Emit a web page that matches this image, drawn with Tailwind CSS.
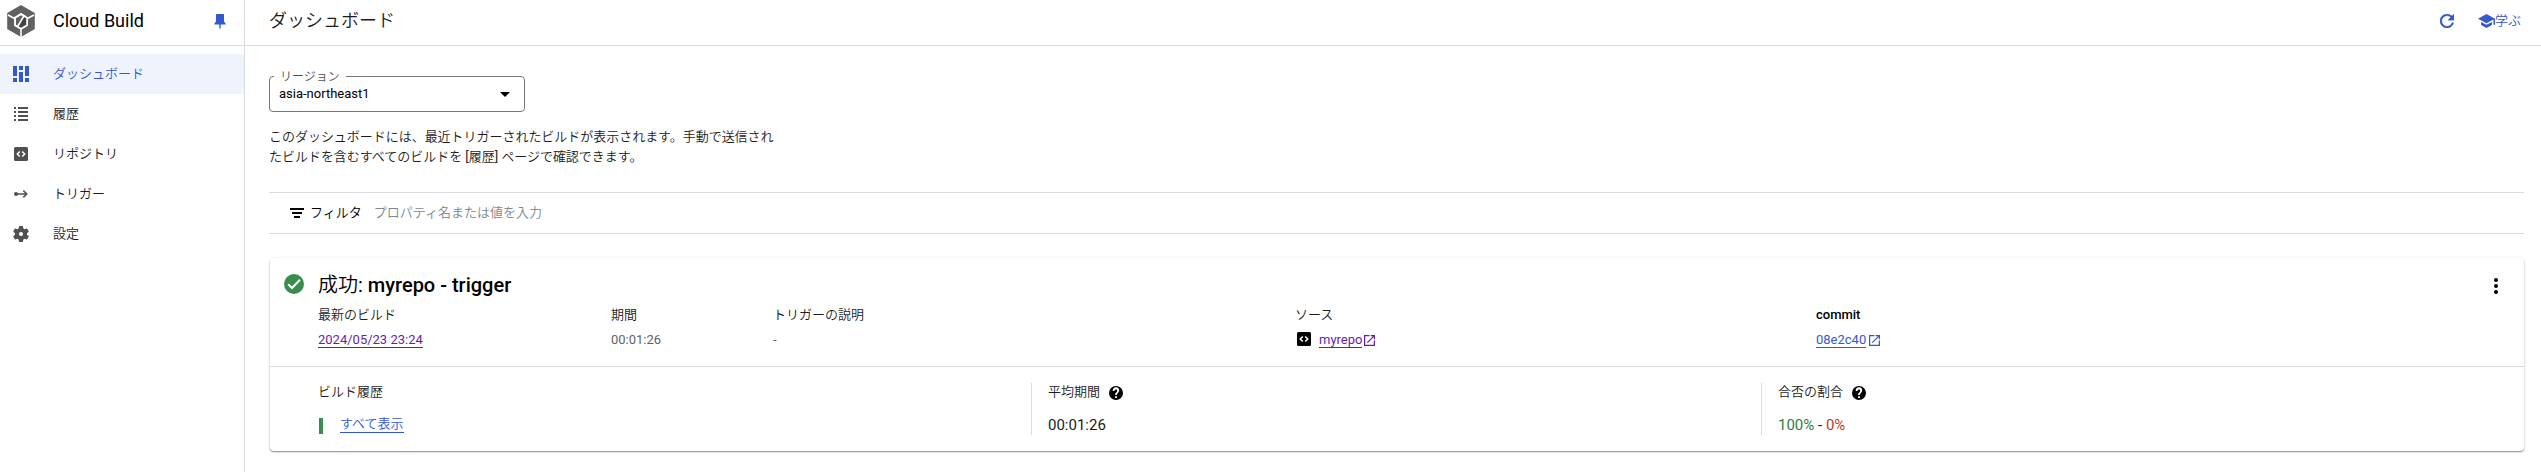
<!DOCTYPE html>
<html lang="ja">
<head>
<meta charset="utf-8">
<title>Cloud Build</title>
<script src="https://cdn.jsdelivr.net/npm/@tailwindcss/browser@4"></script>
</head>
<body class="w-[2541px] h-[472px] overflow-hidden bg-white text-[13px] leading-5 text-[#1b1b1c] font-[Roboto,'Noto_Sans_CJK_JP_DemiLight','Noto_Sans_CJK_JP_Light','Noto_Sans_CJK_JP',sans-serif]">
<div class="flex h-full">
  <aside class="w-[245px] shrink-0 border-r border-[#dadce0]">
    <div class="flex h-[46px] items-center border-b border-[#dadce0] pl-[7px] pb-[3px]">
      <svg class="h-8 w-7" viewBox="0 0 28 32">
        <path fill="#616161" d="M14 0 27.800 8v16L14 32 .2 24V8z"/>
        <path fill="none" stroke="#fff" stroke-width="1.600" d="M1 10l7 3.800M27 10l-7 3.800M14 23v9M14 9l6 3.700v7.500L14 23.700l-6-3.500v-7.500z"/>
        <path fill="#424242" d="M17.500 10.500 20 12.700v7.500L14 23.700l-3.500-2z"/>
        <path fill="none" stroke="#fff" stroke-width="1.600" d="M17.500 10 10 22.500M14 9l6 3.700v7.500L14 23.700l-6-3.500v-7.500z"/>
      </svg>
      <span class="ml-[18px] text-lg leading-6 text-black">Cloud Build</span>
      <svg class="ml-[70px] h-[15px] w-3" viewBox="0 0 12 15" fill="#3459cb"><path d="M2.500 0h7l.5.500V7.500L11.500 9.200V10.500H6.700V14L6 15l-.7-1V10.500H.5V9.200L2 7.500V.5z"/></svg>
    </div>
    <nav class="pt-2">
      <a class="flex h-10 items-center bg-[#eff3fc] pl-[13px] text-[#3459cb]">
        <svg class="h-4 w-4" viewBox="0 0 16 16" fill="#3459cb"><path d="M0 0h4v10H0zM0 12h4v4H0zM6 0h4v4H6zM6 6h4v10H6zM12 0h4v10h-4zM12 12h4v4h-4z"/></svg>
        <span class="ml-6">ダッシュボード</span>
      </a>
      <a class="flex h-10 items-center pl-[14px]">
        <svg class="h-[14px] w-[14px]" viewBox="0 0 14 14" fill="#505050"><path d="M0 0h2v2H0zM4 0h10v2H4zM0 4h2v2H0zM4 4h10v2H4zM0 8h2v2H0zM4 8h10v2H4zM0 12h2v2H0zM4 12h10v2H4z"/></svg>
        <span class="ml-[25px]">履歴</span>
      </a>
      <a class="flex h-10 items-center pl-[14px]">
        <svg class="h-[14px] w-[14px]" viewBox="0 0 14 14"><rect width="14" height="14" rx="1.500" fill="#505050"/><path d="M5.800 4.500 3.300 7l2.500 2.500M8.200 4.500 10.700 7 8.200 9.500" fill="none" stroke="#fff" stroke-width="1.500"/></svg>
        <span class="ml-[25px]">リポジトリ</span>
      </a>
      <a class="flex h-10 items-center pl-[14px]">
        <svg class="h-2 w-[14px]" viewBox="0 0 14 8" fill="none" stroke="#505050" stroke-width="1.500"><circle cx="2" cy="4" r="2" fill="#505050" stroke="none"/><path d="M2 4h11M9.300.6 12.800 4 9.300 7.400"/></svg>
        <span class="ml-[25px]">トリガー</span>
      </a>
      <a class="flex h-10 items-center pl-[13px]">
        <svg class="h-4 w-4" viewBox="2 2 20 20" fill="#505050"><path d="M19.430 12.980c.04-.32.070-.64.070-.98s-.03-.66-.07-.98l2.110-1.650c.19-.15.240-.42.120-.64l-2-3.460c-.12-.22-.39-.3-.61-.22l-2.490 1c-.52-.4-1.080-.73-1.690-.98l-.38-2.650C14.460 2.180 14.250 2 14 2h-4c-.25 0-.46.18-.49.42l-.38 2.650c-.61.25-1.170.59-1.690.98l-2.490-1c-.23-.09-.49 0-.61.22l-2 3.460c-.13.22-.07.49.12.64l2.110 1.650c-.04.32-.07.65-.07.98s.03.66.07.98l-2.110 1.650c-.19.15-.24.42-.12.64l2 3.460c.12.22.39.3.61.22l2.490-1c.52.4 1.080.73 1.690.98l.38 2.650c.03.24.24.42.49.42h4c.25 0 .46-.18.49-.42l.38-2.650c.61-.25 1.170-.59 1.690-.98l2.490 1c.23.09.49 0 .61-.22l2-3.460c.12-.22.07-.49-.12-.64zM12 14.600a2.600 2.600 0 1 1 0-5.200 2.600 2.600 0 0 1 0 5.200z"/></svg>
        <span class="ml-[24px]">設定</span>
      </a>
    </nav>
  </aside>

  <div class="flex min-w-0 flex-1 flex-col">
    <header class="flex h-[46px] shrink-0 items-center border-b border-[#dadce0] pb-[3px] pl-6 pr-5">
      <h1 class="flex-1 text-lg leading-6">ダッシュボード</h1>
      <svg class="h-[14px] w-[14px]" viewBox="4 4 16 16" fill="#3459cb" stroke="#3459cb" stroke-width=".4"><path d="M17.650 6.350A7.958 7.958 0 0 0 12 4a8 8 0 1 0 7.730 10h-2.080A5.990 5.990 0 0 1 12 18a6 6 0 1 1 0-12c1.660 0 3.140.69 4.220 1.780L13 11h7V4z"/></svg>
      <svg class="ml-6 h-[14px] w-[17px]" viewBox="1 3 22 18" fill="#3459cb"><path d="M5 13.180v4L12 21l7-3.820v-4L12 17zM12 3 1 9l11 6 9-4.910V17h2V9z"/></svg>
      <span class="text-[#3459cb]">学ぶ</span>
    </header>

    <main class="pl-6 pr-[17px] pt-[30px]">
      <fieldset class="relative flex h-[36px] w-[256px] items-center justify-between rounded border border-[#747679] pl-[9px] pr-[14px]">
        <span class="absolute -top-[8px] left-1 bg-white px-[6px] text-xs leading-4 text-[#505050]">リージョン</span>
        <span class="text-black">asia-northeast1</span>
        <svg class="h-[5px] w-[10px]" viewBox="0 0 10 5"><path d="M0 0h10L5 5z"/></svg>
      </fieldset>
      <p class="mt-[15px] whitespace-nowrap tracking-[-0.03px]">このダッシュボードには、最近トリガーされたビルドが表示されます。手動で送信され<br>たビルドを含むすべてのビルドを [履歴] ページで確認できます。</p>

      <div class="mt-[25px] flex h-[42px] items-center border-y border-[#dadce0] pl-[21px] pb-px">
        <svg class="mt-px h-[10px] w-[14px]" viewBox="0 0 14 10"><path d="M0 0h14v2H0zM2 4h10v2H2zM4 8h6v2H4z"/></svg>
        <span class="ml-[6px] text-black">フィルタ</span>
        <span class="ml-[12px] text-[#80868b]">プロパティ名または値を入力</span>
      </div>

      <section class="ml-px mt-6 h-[193px] rounded bg-white shadow-[0_1px_1px_rgba(0,0,0,0.3),0_1px_3px_rgba(0,0,0,0.22)]">
        <div class="flex h-[109px] border-b border-[#dadce0] pl-[14px] pr-[18px] pt-4">
          <svg class="h-5 w-5" viewBox="2 2 20 20"><circle cx="12" cy="12" r="10" fill="#388e4d"/><path d="M6.200 12.300 10 16l8-8.200" fill="none" stroke="#fff" stroke-width="2"/></svg>
          <div class="ml-[14px] flex-1">
            <h2 class="-mt-px text-xl leading-6 text-black">成功: <span class="font-medium">myrepo - trigger</span></h2>
            <div class="mt-[8px] flex">
              <div class="w-[293px]"><div>最新のビルド</div><div class="mt-[5px]"><a class="inline-block h-[18px] border-b border-[#681da8] text-[#681da8]">2024/05/23 23:24</a></div></div>
              <div class="w-[162px]"><div>期間</div><div class="mt-[5px] text-[#5f6368]">00:01:26</div></div>
              <div class="w-[522px]"><div>トリガーの説明</div><div class="mt-[5px] text-[#5f6368]">-</div></div>
              <div class="w-[521px]"><div>ソース</div>
                <div class="mt-[5px] flex items-start pl-[2px]">
                  <svg class="mt-[2px] h-[14px] w-[14px]" viewBox="0 0 14 14"><rect width="14" height="14" rx="1.500"/><path d="M5.800 4.500 3.300 7l2.500 2.500M8.200 4.500 10.700 7 8.200 9.500" fill="none" stroke="#fff" stroke-width="1.500"/></svg>
                  <a class="ml-2 h-[18px] border-b border-[#681da8] text-[#681da8]">myrepo</a>
                  <svg class="ml-[2px] mt-[5px] h-[11px] w-[11px]" viewBox="3 3 18 18" fill="#681da8"><path d="M19 19H5V5h7V3H3v18h18v-9h-2zM14 3v2h3.590l-9.830 9.830 1.410 1.410L19 6.410V10h2V3z"/></svg>
                </div>
              </div>
              <div><div class="font-medium text-black">commit</div>
                <div class="mt-[5px] flex items-start">
                  <a class="h-[18px] border-b border-[#3459cb] text-[#3459cb]">08e2c40</a>
                  <svg class="ml-[3px] mt-[5px] h-[11px] w-[11px]" viewBox="3 3 18 18" fill="#3459cb"><path d="M19 19H5V5h7V3H3v18h18v-9h-2zM14 3v2h3.590l-9.830 9.830 1.410 1.410L19 6.410V10h2V3z"/></svg>
                </div>
              </div>
            </div>
          </div>
          <svg class="mt-1 h-4 w-5" viewBox="0 0 20 16"><circle cx="10" cy="2" r="2"/><circle cx="10" cy="8" r="2"/><circle cx="10" cy="14" r="2"/></svg>
        </div>
        <div class="flex pl-12 pt-4">
          <div class="w-[713px]">
            <div class="-mt-px">ビルド履歴</div>
            <div class="mt-[12px] flex items-start">
              <span class="ml-px mt-1 h-4 w-1 bg-[#388e4d]"></span>
              <a class="ml-[17px] h-[19px] border-b border-[#3459cb] text-[#3459cb]">すべて表示</a>
            </div>
          </div>
          <div class="h-[52px] w-[730px] border-l border-[#dadce0] pl-4">
            <div class="-mt-px flex items-center">平均期間
              <svg class="ml-[9px] mt-px h-[14px] w-[14px]" viewBox="2 2 20 20"><path d="M12 2a10 10 0 1 0 0 20 10 10 0 0 0 0-20zm1.300 17h-2.600v-2.500h2.600zm2-7.600-.9.900c-.8.800-1.100 1.400-1.100 2.700h-2.600v-.5c0-1.100.4-2.100 1.200-2.800l1.200-1.300A2 2 0 1 0 9.800 9H7.400a4.600 4.600 0 1 1 7.900 2.400z"/></svg>
            </div>
            <div class="mt-[13px] text-[15px]">00:01:26</div>
          </div>
          <div class="h-[52px] border-l border-[#dadce0] pl-4">
            <div class="-mt-px flex items-center">合否の割合
              <svg class="ml-[9px] mt-px h-[14px] w-[14px]" viewBox="2 2 20 20"><path d="M12 2a10 10 0 1 0 0 20 10 10 0 0 0 0-20zm1.300 17h-2.600v-2.500h2.600zm2-7.600-.9.900c-.8.800-1.100 1.400-1.100 2.700h-2.600v-.5c0-1.100.4-2.100 1.200-2.800l1.200-1.300A2 2 0 1 0 9.800 9H7.400a4.600 4.600 0 1 1 7.900 2.400z"/></svg>
            </div>
            <div class="mt-[13px] text-[15px]"><span class="text-[#2d7d40]">100%</span> - <span class="text-[#c5372c]">0%</span></div>
          </div>
        </div>
      </section>
    </main>
  </div>
</div>
</body>
</html>
